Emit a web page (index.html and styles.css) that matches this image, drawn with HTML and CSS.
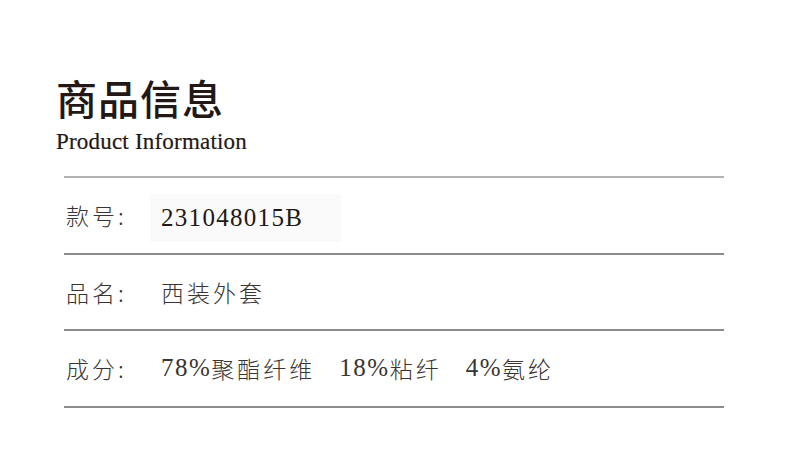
FILE: index.html
```html
<!DOCTYPE html>
<html lang="zh-CN">
<head>
<meta charset="utf-8">
<link rel="stylesheet" href="styles.css">
</head>
<body>
<div class="page">
  <header class="head">
    <h1 class="title">商品信息</h1>
    <div class="subtitle">Product Information</div>
  </header>
  <div class="table">
    <div class="row first">
      <span class="label">款号:</span>
      <span class="value code">231048015B</span>
    </div>
    <div class="row">
      <span class="label">品名:</span>
      <span class="value">西装外套</span>
    </div>
    <div class="row">
      <span class="label">成分:</span>
      <span class="value"><span class="num">78%</span>聚酯纤维<span class="gap"></span><span class="num">18%</span>粘纤<span class="gap"></span><span class="num">4%</span>氨纶</span>
    </div>
  </div>
</div>
</body>
</html>
```
FILE: styles.css
```css
html, body {
  margin: 0;
  padding: 0;
  background: #fff;
}
.page {
  width: 790px;
  height: 461px;
  padding: 71px 0 0 56px;
  box-sizing: border-box;
  color: #231815;
}
.head {
  display: flex;
  flex-direction: column;
}
.title {
  margin: 0;
  font-family: "Noto Sans CJK SC", sans-serif;
  font-weight: 500;
  font-size: 41px;
  line-height: 52px;
  letter-spacing: 1px;
  color: #231815;
}
.subtitle {
  margin-top: 6px;
  font-family: "Liberation Serif", serif;
  font-size: 23px;
  line-height: 26px;
  letter-spacing: 0.2px;
  color: #231815;
  -webkit-text-stroke: 0.2px #231815;
}
.table {
  margin-top: 21px;
  margin-left: 8px;
  width: 660px;
}
.row {
  display: flex;
  align-items: center;
  height: 74.5px;
  border-bottom: 2px solid #8d8b8b;
  font-family: "Noto Sans CJK SC", sans-serif;
  font-weight: 300;
  font-size: 23px;
  color: #3a3433;
  letter-spacing: 3px;
}
.row.first {
  border-top: 2px solid #b3b3b3;
}
.label {
  width: 95px;
  padding-left: 2px;
  letter-spacing: 3px;
}
.value {
  display: flex;
  align-items: center;
}
.code {
  background: #fafafa;
  height: 48px;
  margin-top: 6px;
  padding: 0 38px 0 11px;
  margin-left: -11px;
  font-family: "Liberation Serif", serif;
  font-weight: 400;
  font-size: 25px;
  letter-spacing: 1.3px;
  color: #231815;
}
.num {
  font-family: "Liberation Serif", serif;
  font-size: 25px;
  letter-spacing: 1.5px;
}
.gap {
  display: inline-block;
  width: 24px;
}
```
